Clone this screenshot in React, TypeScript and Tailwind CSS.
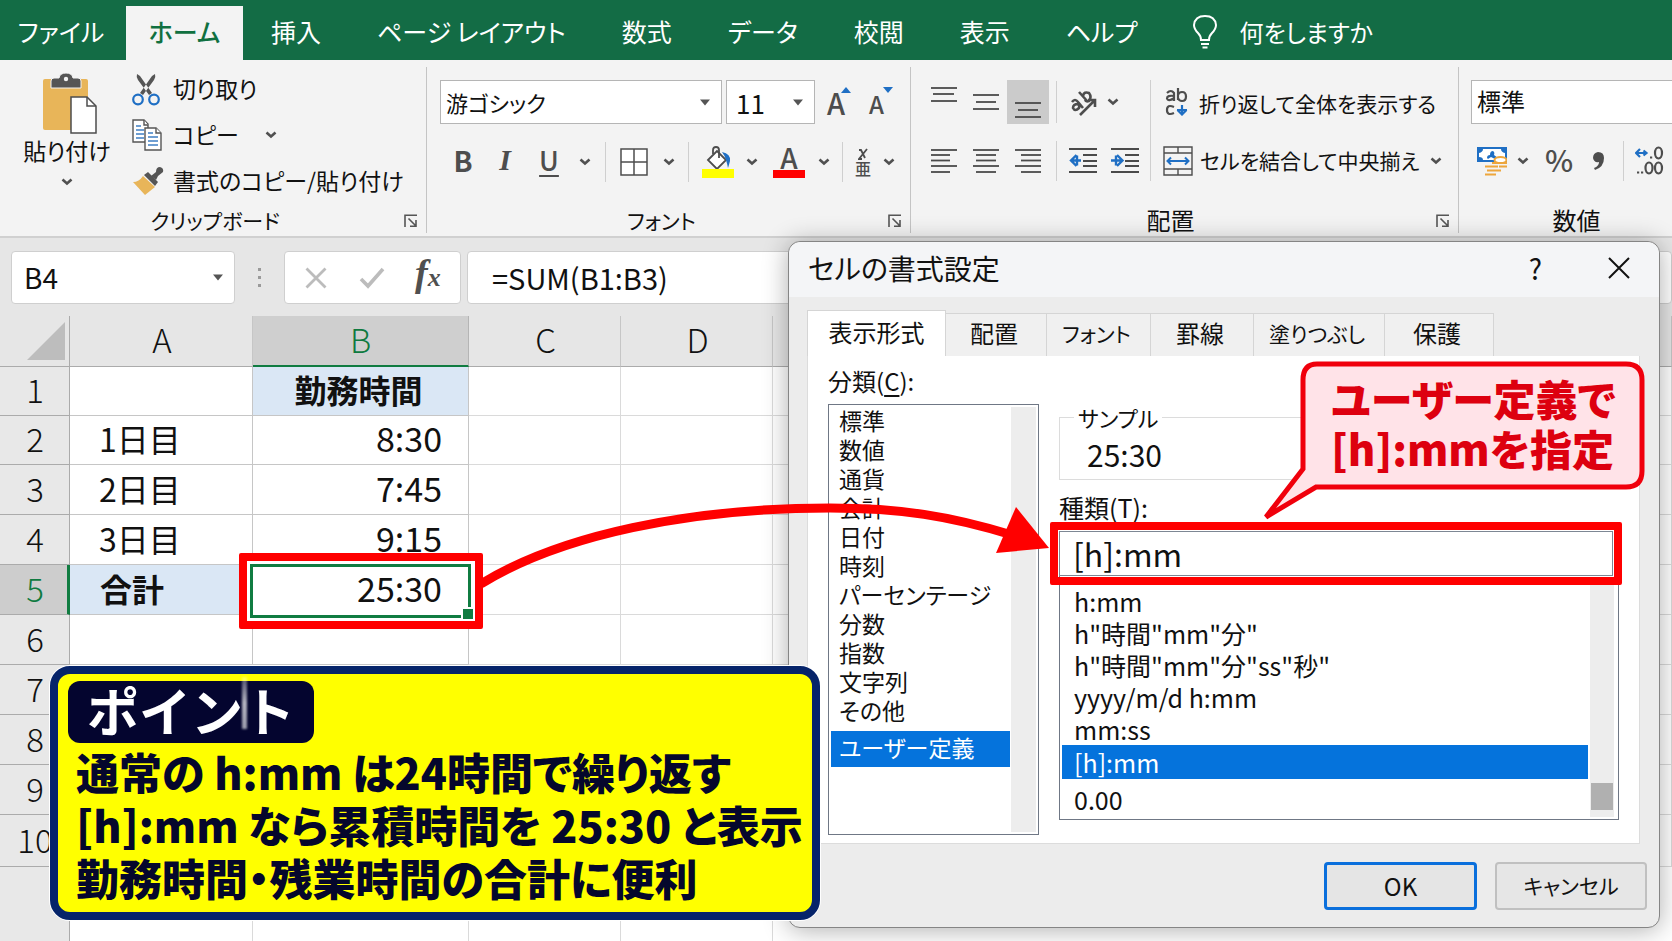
import type { ReactNode } from "react";

const ribbonTabs = ["挿入", "ページ レイアウト", "数式", "データ", "校閲", "表示", "ヘルプ"];
const columns = ["A", "B", "C", "D", "E"];
const rows = [
  { n: 1, a: "", b: "勤務時間", h: "h-[49px]" },
  { n: 2, a: "1日目", b: "8:30", h: "h-[49px]" },
  { n: 3, a: "2日目", b: "7:45", h: "h-[50px]" },
  { n: 4, a: "3日目", b: "9:15", h: "h-[50px]" },
  { n: 5, a: "合計", b: "25:30", h: "h-[50px]" },
  { n: 6, a: "", b: "", h: "h-[50px]" },
  { n: 7, a: "", b: "", h: "h-[50px]" },
  { n: 8, a: "", b: "", h: "h-[50px]" },
  { n: 9, a: "", b: "", h: "h-[50px]" },
  { n: 10, a: "", b: "", h: "h-[52px]" },
];
const categories = ["標準", "数値", "通貨", "会計", "日付", "時刻", "パーセンテージ", "分数", "指数", "文字列", "その他"];
const formats = ["h:mm", 'h"時間"mm"分"', 'h"時間"mm"分"ss"秒"', "yyyy/m/d h:mm", "mm:ss"];

function Chevron() {
  return (
    <svg width="12" height="8" viewBox="0 0 12 8" fill="none" stroke="#505050" strokeWidth="2.6" aria-hidden="true">
      <path d="M1.5 1.5 6 5.5l4.5-4" />
    </svg>
  );
}

function Triangle() {
  return (
    <svg width="12" height="7" viewBox="0 0 12 7" className="pointer-events-none absolute right-[10px]" aria-hidden="true">
      <path d="M1 .5h10L6 6.5z" fill="#555" />
    </svg>
  );
}

function Divider({ className = "h-10" }: { className?: string }) {
  return <div className={`w-px shrink-0 bg-[#cfcfcf] ${className}`} />;
}

function Launcher() {
  return (
    <button type="button" aria-label="詳細設定" className="shrink-0">
      <svg width="14" height="14" viewBox="0 0 14 14" fill="none" stroke="#555" strokeWidth="1.6" aria-hidden="true">
        <path d="M1 13V1.200h12M4.500 4.500l7.500 7.500M12 6v6.200H6" />
      </svg>
    </button>
  );
}

function Group({ label, className, labelClass = "", launcher = true, children }: { label: string; className: string; labelClass?: string; launcher?: boolean; children: ReactNode }) {
  return (
    <section aria-label={label} className={`flex flex-col ${className}`}>
      <div className="h-[142px]">{children}</div>
      <div className="flex h-6 items-center pr-2">
        <span className={`flex-1 pb-[2px] text-center leading-6 ${labelClass}`}>{label}</span>
        {launcher && <Launcher />}
      </div>
    </section>
  );
}

function Lines({ rows: data }: { rows: number[][] }) {
  return (
    <svg width="28" height="28" viewBox="0 0 28 28" stroke="#4a4a4a" strokeWidth="1.8" aria-hidden="true">
      {data.map(([x1, x2, y]) => (
        <path key={y} d={`M${x1} ${y}H${x2}`} />
      ))}
    </svg>
  );
}

function IconButton({ label, className = "", children }: { label: string; className?: string; children: ReactNode }) {
  return (
    <button type="button" aria-label={label} className={`flex shrink-0 items-center justify-center ${className}`}>
      {children}
    </button>
  );
}

function PasteIcon() {
  return (
    <svg width="56" height="62" viewBox="0 0 56 62" aria-hidden="true">
      <rect x="1" y="6" width="45" height="51" rx="2" fill="#e8b559" />
      <path d="M9 15V8q0-3 3-3h5q1-5 7-5t7 5h5q3 0 3 3v7z" fill="#555" stroke="#f3f3f3" strokeWidth="1" />
      <circle cx="24" cy="6" r="2.200" fill="#f3f3f3" />
      <path d="M29 24h16l9 9v27H29z" fill="#fff" stroke="#4d4d4d" strokeWidth="1.500" />
      <path d="M45 24v9h9" fill="none" stroke="#4d4d4d" strokeWidth="1.500" />
    </svg>
  );
}

function CutIcon() {
  return (
    <svg width="28" height="32" viewBox="0 0 28 32" fill="none" aria-hidden="true">
      <path d="M5 0q-1 3 1 6l11 15 3-2L8 2zM23 0q1 3-1 6L11 21l-3-2L20 2z" fill="#555" />
      <circle cx="6" cy="25.500" r="4.800" stroke="#1f6fc4" strokeWidth="2.200" />
      <circle cx="22" cy="25.500" r="4.800" stroke="#1f6fc4" strokeWidth="2.200" />
    </svg>
  );
}

function CopyIcon() {
  return (
    <svg width="30" height="32" viewBox="0 0 30 32" fill="#fff" stroke="#555" strokeWidth="1.400" aria-hidden="true">
      <path d="M1 1h11l4 4v18H1z" />
      <path d="M12 1v5h4" />
      <path d="M4 7h5M4 11h8M4 15h8M4 19h8" stroke="#3f7fc4" />
      <path d="M13 9h11l5 5v17H13z" />
      <path d="M24 9v5h5" />
      <path d="M16 14h5M16 18h10M16 22h10M16 26h10" stroke="#3f7fc4" />
    </svg>
  );
}

function PainterIcon() {
  return (
    <svg width="32" height="28" viewBox="0 0 32 28" aria-hidden="true">
      <path d="M1 15q6 0 10-6l12 11-10 8z" fill="#e8b559" />
      <path d="M12 8l4-3 10 10-3 4z" fill="#555" />
      <path d="M19 9l5-4q0-5 4-5 4 1 3 5l-5 4-2 4z" fill="#555" />
    </svg>
  );
}

function BorderIcon() {
  return (
    <svg width="28" height="28" viewBox="0 0 28 28" fill="#fff" stroke="#4d4d4d" strokeWidth="1.500" aria-hidden="true">
      <path d="M1 1h26v26H1zM14 1v26M1 14h26" />
    </svg>
  );
}

function FillIcon() {
  return (
    <svg width="32" height="32" viewBox="0 0 32 32" fill="none" aria-hidden="true">
      <path d="M6 14 15 5l9 9-9 9z" fill="#fff" stroke="#4d4d4d" strokeWidth="1.800" />
      <path d="M11 8V4q0-3 3-3t3 3v8" stroke="#4d4d4d" strokeWidth="1.800" />
      <path d="M20 6q9 2 8 9-1 4-2 7-1-5-2-8-1-4-4-8z" fill="#1f6fc4" />
      <path d="M0 23h32v9H0z" fill="#ff0" />
    </svg>
  );
}

function OrientationIcon() {
  return (
    <svg width="30" height="30" viewBox="0 0 30 30" fill="none" stroke="#4d4d4d" strokeWidth="2.600" aria-hidden="true">
      <path d="M11 28 26 13M19 13h7v7" />
      <path d="M3 15q3-4 6 0l5 6M9 17q-5 0-5 4 2 4 6 0 1-2-1-4" />
      <path d="M10 5l9 10M14 9q1-5 6-3 3 4 0 8-3 1-4-1" />
    </svg>
  );
}

function WrapIcon() {
  return (
    <svg width="24" height="28" viewBox="0 0 24 28" fill="none" stroke="#4d4d4d" strokeWidth="2.200" aria-hidden="true">
      <path d="M2 5q4-4 7 0v8M9 8q-7-1-7 2.500Q3 14 9 10" />
      <path d="M13 0v12M13 7q1-3 4-3 4 0 4 4.500T17 13q-3 0-4-3" />
      <path d="M9 19q-7-3-7 3t7 3" />
      <path d="M17 17v9M12.500 22l4.500 4.500 4.500-4.500M12 22h10" stroke="#1f6fc4" />
    </svg>
  );
}

function MergeIcon() {
  return (
    <svg width="30" height="30" viewBox="0 0 30 30" fill="none" stroke="#4d4d4d" strokeWidth="1.400" aria-hidden="true">
      <path d="M1 1h28v28H1zM1 7h28M1 23h28M15 1v6M15 23v6" />
      <path d="M5 15h20M8 11.500 4.500 15 8 18.500M22 11.500l3.500 3.500-3.500 3.500" stroke="#1f6fc4" strokeWidth="2" />
    </svg>
  );
}

function IndentIcon({ out }: { out?: boolean }) {
  return (
    <svg width="28" height="28" viewBox="0 0 28 28" fill="none" stroke="#4a4a4a" strokeWidth="1.800" aria-hidden="true">
      <path d="M0 2h28M14 8h14M14 14h14M14 19h14M0 25h28" />
      {out ? (
        <path d="M12 13.500H2M7.500 8 2 13.500 7.500 19M8 8.500v10" stroke="#1f6fc4" strokeWidth="2.400" />
      ) : (
        <path d="M0 13.500h11M6 8l5.500 5.500L6 19M5 8.500v10" stroke="#1f6fc4" strokeWidth="2.400" />
      )}
    </svg>
  );
}

function CurrencyIcon() {
  return (
    <svg width="30" height="30" viewBox="0 0 30 30" fill="none" aria-hidden="true">
      <path d="M0 1h30v15H0z" fill="#1f6fc4" />
      <path d="M6 3h18q0 3 4 4v4q-4 0-4 3H6q0-3-4-3V7q4-1 4-4z" fill="#fff" />
      <path d="M10 12q0-3 3-3 0-4 3-4 2 1 1 4l4 3-3 1-4-2-3 2z" fill="#1f6fc4" />
      <ellipse cx="23.500" cy="14" rx="6" ry="3" fill="#fff" stroke="#eda63c" strokeWidth="2" />
      <path d="M15 17h15M8 20.500h13M22 20.500h8M10 24.500h14M8 28.500h11" stroke="#eda63c" strokeWidth="2" />
    </svg>
  );
}

function DecimalIcon() {
  return (
    <svg width="29" height="30" viewBox="0 0 29 30" fill="none" stroke="#4d4d4d" strokeWidth="2.200" aria-hidden="true">
      <path d="M1 7h10M5 3 1 7l4 4M8.500 4.500 11.500 7 8.500 9.500" stroke="#1f6fc4" />
      <ellipse cx="23.500" cy="7" rx="3.500" ry="5.500" />
      <ellipse cx="14" cy="22" rx="3.500" ry="5.500" />
      <ellipse cx="23.500" cy="22" rx="3.500" ry="5.500" />
      <path d="M15 11.500h2.200M2 26.500h2.200M6 26.500h2.200" />
    </svg>
  );
}

function Ribbon() {
  return (
    <div className="flex overflow-hidden border-b-2 border-[#d0d0d0] bg-[#f3f3f3] pt-[7px] pb-[3px]">
      <Group label="クリップボード" className="w-[427px] shrink-0 border-r border-[#c4c4c4]" labelClass="pl-[26px] text-[21px]">
        <div className="flex h-full">
          <button type="button" className="ml-5 flex w-[94px] flex-col items-center pt-[6px] text-[23px]">
            <span className="pl-[5px]"><PasteIcon /></span>
            <span className="-mt-[3px] leading-9 whitespace-nowrap">貼り付け</span>
            <span className="mt-[10px]"><Chevron /></span>
          </button>
          <div className="ml-[18px] flex flex-col text-[23px]">
            <button type="button" className="flex h-[45px] items-center">
              <span className="w-[41px]"><CutIcon /></span>
              <span className="pb-[2px]">切り取り</span>
            </button>
            <button type="button" className="flex h-[46px] items-center">
              <span className="w-[41px]"><CopyIcon /></span>
              <span className="w-[92px] pb-[2px] text-left">コピー</span>
              <Chevron />
            </button>
            <button type="button" className="flex h-[46px] items-center whitespace-nowrap">
              <span className="w-[41px]"><PainterIcon /></span>
              <span className="pb-[2px]">書式のコピー/貼り付け</span>
            </button>
          </div>
        </div>
      </Group>

      <Group label="フォント" className="w-[484px] shrink-0 border-r border-[#c4c4c4]" labelClass="pl-2 text-[21px]">
        <div className="flex items-center pt-[13px] pl-[13px]">
          <div className="relative flex h-11 w-[282px] items-center border border-[#b5b5b5] bg-white">
            <select aria-label="フォント名" className="h-full w-full appearance-none pl-[5px] text-[22px]">
              <option>游ゴシック</option>
            </select>
            <Triangle />
          </div>
          <div className="relative ml-1 flex h-11 w-[89px] items-center border border-[#b5b5b5] bg-white">
            <select aria-label="フォント サイズ" className="h-full w-full appearance-none pl-[9px] text-[26px]">
              <option>11</option>
            </select>
            <Triangle />
          </div>
          <IconButton label="フォント サイズの拡大" className="ml-3">
            <span className="text-[29px] leading-10 font-medium text-[#4d4d4d]">A</span>
            <svg width="10" height="6" viewBox="0 0 10 6" className="mb-6 -ml-1" aria-hidden="true"><path d="M0 6 5 0l5 6z" fill="#1f6fc4" /></svg>
          </IconButton>
          <IconButton label="フォント サイズの縮小" className="ml-[18px]">
            <span className="pt-1 text-2xl font-medium text-[#4d4d4d]">A</span>
            <svg width="10" height="6" viewBox="0 0 10 6" className="mb-6 -ml-px" aria-hidden="true"><path d="M0 0h10L5 6z" fill="#1f6fc4" /></svg>
          </IconButton>
        </div>
        <div className="mt-[18px] flex h-10 items-center pl-[26px] text-[#4d4d4d]">
          <IconButton label="太字" className="w-5 pb-1 text-[28px] leading-9 font-bold">B</IconButton>
          <IconButton label="斜体" className="ml-[22px] w-5 pb-1 font-['Liberation_Serif',serif] text-3xl leading-9 font-bold italic">I</IconButton>
          <IconButton label="下線" className="ml-6 w-5 pb-1 text-[27px] leading-9 font-medium underline underline-offset-4">U</IconButton>
          <IconButton label="下線の種類" className="ml-5"><Chevron /></IconButton>
          <Divider className="ml-[14px] h-10" />
          <IconButton label="罫線" className="ml-[14px]"><BorderIcon /></IconButton>
          <IconButton label="罫線の種類" className="ml-[15px]"><Chevron /></IconButton>
          <Divider className="ml-[13px] h-10" />
          <IconButton label="塗りつぶしの色" className="ml-[13px]"><FillIcon /></IconButton>
          <IconButton label="塗りつぶしの色を選択" className="ml-3"><Chevron /></IconButton>
          <IconButton label="フォントの色" className="ml-[15px] h-8 w-8 border-b-8 border-[#f00] pb-[2px] text-[28px] leading-6 font-medium">A</IconButton>
          <IconButton label="フォントの色を選択" className="ml-[13px]"><Chevron /></IconButton>
          <Divider className="ml-3 h-10" />
          <IconButton label="ふりがな" className="ml-3 w-4 flex-col text-base leading-4 font-medium">
            <svg width="10" height="12" viewBox="0 0 10 12" fill="none" stroke="#4d4d4d" strokeWidth="1.800" aria-hidden="true"><path d="M1 2h2l4 8M9 1 1 11h3" /></svg>
            <span>亜</span>
          </IconButton>
          <IconButton label="ふりがなの設定" className="ml-3"><Chevron /></IconButton>
        </div>
      </Group>

      <Group label="配置" className="w-[548px] shrink-0 border-r border-[#c4c4c4]" labelClass="-ml-1.5 text-2xl">
        <div className="flex h-full pt-[13px]">
          <div>
            <div className="flex h-11 items-center pl-[19px]">
              <IconButton label="上揃え" className="-mt-1.5"><Lines rows={[[1, 27, 3], [3, 24, 9], [1, 27, 16]]} /></IconButton>
              <IconButton label="上下中央揃え" className="ml-[14px]"><Lines rows={[[1, 27, 7], [4, 24, 14], [1, 27, 21]]} /></IconButton>
              <IconButton label="下揃え" className="ml-[7px] h-11 w-[42px] bg-[#cbcbcb] pt-1"><Lines rows={[[1, 27, 13], [4, 24, 20], [1, 27, 27]]} /></IconButton>
              <Divider className="ml-[7px] h-[42px]" />
              <IconButton label="方向" className="ml-3"><OrientationIcon /></IconButton>
              <IconButton label="方向の選択" className="ml-2"><Chevron /></IconButton>
            </div>
            <div className="mt-[17px] flex h-10 items-center pl-[19px]">
              <IconButton label="左揃え"><Lines rows={[[1, 27, 3], [1, 20, 8], [1, 20, 13.5], [1, 27, 19], [1, 20, 25]]} /></IconButton>
              <IconButton label="中央揃え" className="ml-[14px]"><Lines rows={[[1, 27, 3], [4, 24, 8], [4, 24, 13.5], [1, 27, 19], [4, 24, 25]]} /></IconButton>
              <IconButton label="右揃え" className="ml-[14px]"><Lines rows={[[1, 27, 3], [7, 27, 8], [7, 27, 13.5], [1, 27, 19], [7, 27, 25]]} /></IconButton>
              <Divider className="ml-[14px] h-10" />
              <IconButton label="インデントを減らす" className="ml-3"><IndentIcon out /></IconButton>
              <IconButton label="インデントを増やす" className="ml-[14px]"><IndentIcon /></IconButton>
            </div>
          </div>
          <Divider className="ml-[11px] h-[101px]" />
          <div className="ml-3 text-[21px] whitespace-nowrap">
            <button type="button" className="flex h-11 items-center">
              <span className="w-9 pl-[2px]"><WrapIcon /></span>
              <span className="pt-[3px]">折り返して全体を表示する</span>
            </button>
            <div className="mt-[17px] flex h-10 items-center">
              <button type="button" className="flex items-center">
                <span className="w-[37px]"><MergeIcon /></span>セルを結合して中央揃え
              </button>
              <IconButton label="結合の種類" className="ml-[11px]"><Chevron /></IconButton>
            </div>
          </div>
        </div>
      </Group>

      <Group label="数値" className="min-w-[213px] flex-1" launcher={false} labelClass="pl-[30px] text-2xl">
        <div className="flex pt-[13px] pl-3">
          <select aria-label="表示形式" className="h-11 w-full appearance-none border border-r-0 border-[#b5b5b5] bg-white pb-[2px] pl-[5px] text-2xl">
            <option>標準</option>
          </select>
        </div>
        <div className="mt-[17px] flex h-10 items-center pl-[18px] text-[#4d4d4d]">
          <IconButton label="通貨表示形式"><CurrencyIcon /></IconButton>
          <IconButton label="通貨の選択" className="ml-[10px]"><Chevron /></IconButton>
          <IconButton label="パーセント スタイル" className="ml-4 pb-1 text-[30px] font-medium">%</IconButton>
          <IconButton label="桁区切りスタイル" className="ml-5 w-3">
            <svg width="12" height="18" viewBox="0 0 12 18" aria-hidden="true"><path d="M5 0q6 0 6 6 0 9-9 12l-1-2q5-2 5-6-5 1-6-4 0-5 5-6z" fill="#4d4d4d" /></svg>
          </IconButton>
          <Divider className="ml-[18px] h-10" />
          <IconButton label="小数点以下の表示桁数を増やす" className="ml-[11px]"><DecimalIcon /></IconButton>
        </div>
      </Group>
    </div>
  );
}

function FormulaBar() {
  return (
    <div className="flex h-[78px] bg-[#e6e6e6] pt-[13px] pl-[11px]">
      <div className="relative flex h-[53px] w-[224px] items-center rounded border border-[#cfcfcf] bg-white">
        <select aria-label="名前ボックス" className="h-full w-full appearance-none pb-[2px] pl-3 text-[28px]">
          <option>B4</option>
        </select>
        <Triangle />
      </div>
      <svg width="4" height="20" viewBox="0 0 4 20" className="mt-[17px] ml-[23px]" fill="#9a9a9a" aria-hidden="true">
        <path d="M0 0h3v3H0zM0 8h3v3H0zM0 16h3v3H0z" />
      </svg>
      <div className="ml-[22px] flex h-[53px] w-[177px] items-center rounded border border-[#cfcfcf] bg-white">
        <IconButton label="キャンセル" className="ml-5">
          <svg width="22" height="22" viewBox="0 0 22 22" stroke="#bcbcbc" strokeWidth="2.800" aria-hidden="true"><path d="m1.500 1.500 19 19M20.500 1.500l-19 19" /></svg>
        </IconButton>
        <IconButton label="入力" className="ml-8">
          <svg width="26" height="22" viewBox="0 0 26 22" fill="none" stroke="#bcbcbc" strokeWidth="3.600" aria-hidden="true"><path d="m2 12 7 7L24 2" /></svg>
        </IconButton>
        <button type="button" aria-label="関数の挿入" className="ml-[30px] pb-1 font-['Liberation_Serif',serif] text-[38px] leading-10 font-bold text-[#505050] italic">
          f<span className="text-[26px]">x</span>
        </button>
      </div>
      <input aria-label="数式バー" defaultValue="=SUM(B1:B3)" className="ml-[6px] h-[53px] min-w-0 flex-1 rounded border border-[#cfcfcf] bg-white pb-[2px] pl-6 text-[29px]" />
    </div>
  );
}

function Sheet() {
  return (
    <table className="w-full flex-1 table-fixed border-separate border-spacing-0 bg-white">
      <colgroup>
        <col className="w-[70px]" />
        <col className="w-[183px]" />
        <col className="w-[216px]" />
        <col className="w-[152px]" />
        <col className="w-[152px]" />
        <col />
      </colgroup>
      <thead>
        <tr className="h-[51px] bg-[#e6e6e6] text-[33px] leading-10">
          <th className="border-r border-b border-[#ababab] p-0">
            <svg width="39" height="40" viewBox="0 0 39 40" className="ml-[27px]" aria-hidden="true"><path d="M38 1v38H0z" fill="#bdbdbd" /></svg>
          </th>
          {columns.map((c) => (
            <th key={c} scope="col" className={c === "B" ? "border-r border-b-2 border-r-[#b5b5b5] border-b-[#107c41] bg-[#cfcfcf] p-0 pb-1 font-light text-[#0f7a40]" : "border-r border-b border-r-[#c6c6c6] border-b-[#ababab] p-0 pb-1 pl-[2px] font-light"}>
              {c}
            </th>
          ))}
        </tr>
      </thead>
      <tbody>
        {rows.map((r) => (
          <tr key={r.n} className={r.h}>
            <th scope="row" className={r.n === 5 ? "border-r-3 border-b border-r-[#107c41] border-b-[#ababab] bg-[#cdcdcd] p-0 pb-1 pl-[3px] text-[33px] leading-10 font-light text-[#0f7a40]" : "border-r border-b border-[#ababab] bg-[#e8e8e8] p-0 pb-1 pl-px text-[33px] leading-10 font-light"}>
              {r.n}
            </th>
            <td className={r.n === 5 ? "border-r border-b border-[#c6c6c6] bg-[#dae7f5] p-0 pb-1 pl-[30px] text-[32px] leading-10 font-bold" : "border-r border-b border-[#c6c6c6] p-0 pb-1 pl-[29px] text-[32px] leading-10"}>{r.a}</td>
            {r.n === 1 ? (
              <td className="border-r border-b border-[#c6c6c6] bg-[#dae7f5] p-0 pr-1 pb-1 text-center text-[32px] leading-10 font-bold">{r.b}</td>
            ) : (
              <td className={r.n === 5 ? "relative z-10 border-r border-b border-[#c6c6c6] p-0 pr-[26px] pb-1 text-right text-[34px] leading-10" : "border-r border-b border-[#c6c6c6] p-0 pr-[26px] pb-1 text-right text-[34px] leading-10"}>
                {r.n === 5 && (
                  <>
                    <span className="absolute -top-3 -right-[15px] -bottom-[15px] -left-[14px] rounded-xs border-8 border-[#f00] bg-white" />
                    <span className="absolute -top-px -right-[3px] -bottom-1 -left-[3px] border-[3px] border-[#107c41]" />
                    <span className="absolute -right-[5px] -bottom-[5px] size-3 border-t-2 border-l-2 border-white bg-[#107c41]" />
                  </>
                )}
                <span className="relative">{r.b}</span>
              </td>
            )}
            <td className="border-r border-b border-[#dadada]" />
            <td className="border-r border-b border-[#dadada]" />
            <td className="border-r border-b border-[#dadada]" />
          </tr>
        ))}
        <tr className="h-[100px]">
          <th className="border-r border-[#ababab] bg-[#e8e8e8]" />
          <td className="border-r border-[#dadada]" />
          <td className="border-r border-[#dadada]" />
          <td className="border-r border-[#dadada]" />
          <td className="border-r border-[#dadada]" />
          <td />
        </tr>
      </tbody>
    </table>
  );
}

function Callout() {
  return (
    <div className="absolute top-[119px] right-[14px] z-20 h-[162px] w-[385px]">
      <svg width="385" height="162" viewBox="0 0 385 162" className="absolute inset-0" aria-hidden="true">
        <path d="M57 3H366q16 0 16 16v91q0 16-16 16H56L6 156 43 108V19q0-16 14-16z" fill="#ffe3e8" stroke="#f0000c" strokeWidth="5" strokeLinejoin="miter" />
      </svg>
      <p className="relative pt-3 pl-[71px] text-[42px] leading-[50px] font-black whitespace-nowrap text-[#dd000f]">
        ユーザー定義で
        <br />
        [h]:mmを指定
      </p>
    </div>
  );
}

function FormatDialog() {
  const tab = "h-[43px] border-t border-r border-[#d5d5d5] bg-[#f0f0f0] pr-1 pb-1 text-center leading-9";
  return (
    <div role="dialog" aria-label="セルの書式設定" className="absolute top-[241px] right-3 left-[788px] flex flex-col rounded-xl border border-[#858585] bg-[#ececec] shadow-[0_2px_26px_rgba(0,0,0,0.32)]">
      <div className="flex h-[55px] items-center rounded-t-xl bg-[#f4f5f7] pr-[29px] pb-[3px] pl-[19px]">
        <h2 className="flex-1 text-[28px] leading-10">セルの書式設定</h2>
        <button type="button" aria-label="ヘルプ" className="mr-[66px] text-[28px] leading-8">?</button>
        <IconButton label="閉じる">
          <svg width="22" height="22" viewBox="0 0 22 22" stroke="#111" strokeWidth="2" aria-hidden="true"><path d="m1 1 20 20M21 1 1 21" /></svg>
        </IconButton>
      </div>
      <div role="tablist" className="flex items-end px-[18px] pt-[13px] text-2xl whitespace-nowrap">
        <button type="button" role="tab" aria-selected="true" className="h-[46px] w-[139px] border-x border-t border-[#d5d5d5] bg-white pb-1 leading-9">表示形式</button>
        <button type="button" role="tab" className={`w-[101px] text-2xl ${tab}`}>配置</button>
        <button type="button" role="tab" className={`w-[104px] text-[21px] ${tab}`}>フォント</button>
        <button type="button" role="tab" className={`w-[103px] text-2xl ${tab}`}>罫線</button>
        <button type="button" role="tab" className={`w-[131px] text-[21px] ${tab}`}>塗りつぶし</button>
        <button type="button" role="tab" className={`w-[109px] text-2xl ${tab}`}>保護</button>
      </div>
      <div className="mr-[19px] ml-[18px] flex h-[488px] border border-t-0 border-[#dcdcdc] bg-white px-5 pt-3">
        <div className="w-[211px] shrink-0">
          <p id="category" className="text-2xl leading-[26px]">分類(<u className="underline-offset-4">C</u>):</p>
          <div className="mt-[10px] flex h-[431px] border border-[#6f7785] p-[2px]">
            <ul role="listbox" aria-labelledby="category" className="flex-1 text-[23px]">
              {categories.map((c) => (
                <li key={c} role="option" aria-selected="false" className="h-[29px] pl-2 leading-[26px] whitespace-nowrap">{c}</li>
              ))}
              <li role="option" aria-selected="true" className="mt-[5px] h-9 bg-[#0573dc] pl-2 leading-[33px] text-white">ユーザー定義</li>
            </ul>
            <div className="ml-px w-[25px] bg-[#ededed]" />
          </div>
        </div>
        <div className="ml-5 min-w-0 flex-1 pt-9">
          <fieldset className="h-[76px] border border-[#dcdcdc]">
            <legend className="ml-[14px] px-1 text-[22px] leading-[26px]">サンプル</legend>
            <p className="pl-[27px] text-[30px] leading-[48px]">25:30</p>
          </fieldset>
          <label htmlFor="format" className="mt-[14px] block text-[25px] leading-[26px]">種類(T):</label>
          <div className="relative z-10 mt-[11px] mr-[6px] h-[45px]">
            <input id="format" defaultValue="[h]:mm" className="h-full w-full border border-[#7d8794] bg-white pb-px pl-[13px] text-[32px]" />
            <span className="pointer-events-none absolute -inset-[9px] rounded-xs border-8 border-[#f00]" />
          </div>
          <div className="flex h-[244px] border border-t-0 border-[#6f7785] p-[2px]">
            <ul role="listbox" aria-label="表示形式" className="flex-1 pt-[7px] text-[25px]">
              {formats.map((f) => (
                <li key={f} role="option" aria-selected="false" className="h-8 pl-3 leading-8 whitespace-nowrap">{f}</li>
              ))}
              <li role="option" aria-selected="true" className="mb-1 h-[34px] bg-[#0573dc] pl-3 leading-[34px] text-white">[h]:mm</li>
              <li role="option" aria-selected="false" className="h-8 pl-3 leading-8">0.00</li>
            </ul>
            <div className="mr-[2px] ml-[2px] flex w-6 flex-col justify-end bg-[#ededed] px-px pb-[7px]">
              <div className="h-[27px] bg-[#b0b0b0]" />
            </div>
          </div>
        </div>
      </div>
      <div className="flex h-[83px] justify-end gap-[18px] pt-[18px] pr-3">
        <button type="button" className="h-12 w-[153px] rounded border-[3px] border-[#0a6fdc] bg-[#e5e5e5] text-2xl">OK</button>
        <button type="button" className="h-12 w-[152px] rounded border-2 border-[#c0c0c0] bg-[#e6e6e6] text-[21px]">キャンセル</button>
      </div>
      <Callout />
    </div>
  );
}

function PointNote() {
  return (
    <aside className="absolute top-[666px] left-[50px] h-[254px] w-[770px] rounded-[20px] border-8 border-[#06246a] bg-[#ff0] pt-[7px] pl-[10px] text-[#05072c] ring-1 ring-white">
      <h3 className="relative h-[62px] w-[246px] rounded-xl bg-[#04052f] text-center text-[52px] leading-[58px] font-bold text-white [font-feature-settings:normal]">
        ポイント
        <span className="absolute -top-1 left-[174px] h-[52px] w-[5px] bg-linear-to-b from-white/30 via-white/70 to-white/60 blur-[1px]" />
      </h3>
      <p className="mt-[2px] pl-2 text-[43px] leading-[53px] font-black whitespace-nowrap">
        通常の h:mm は24時間で繰り返す
        <br />
        [h]:mm なら累積時間を 25:30 と表示
        <br />
        勤務時間・残業時間の合計に便利
      </p>
    </aside>
  );
}

export default function App() {
  return (
    <div className="relative flex min-h-screen flex-col overflow-hidden bg-white font-['Noto_Sans_CJK_JP',sans-serif] text-[#111] [font-feature-settings:'palt']">
      <div className="h-[941px]">
        <nav className="flex h-[60px] items-end bg-[#136c45] text-[25px] whitespace-nowrap text-white">
          <button type="button" className="h-[54px] w-[126px] pr-1 pb-[2px]">ファイル</button>
          <button type="button" className="h-[54px] w-[117px] bg-[#f3f3f3] pb-[2px] font-medium text-[#107040]">ホーム</button>
          {ribbonTabs.map((t) => (
            <button key={t} type="button" className="h-[54px] px-7 pb-[2px]">{t}</button>
          ))}
          <button type="button" className="flex h-[54px] items-center gap-[22px] pl-7 pb-[2px] text-2xl">
            <svg width="24" height="34" viewBox="0 0 24 34" fill="none" stroke="#fff" strokeWidth="2" aria-hidden="true">
              <path d="M8 25q0-4-3-7-4-4-4-8Q2 1 12 1t11 9q0 4-4 8-3 3-3 7zM8 29h8M9.500 32.500h5" />
            </svg>
            何をしますか
          </button>
        </nav>
        <Ribbon />
        <FormulaBar />
        <Sheet />
      </div>
      <FormatDialog />
      <svg width="580" height="100" viewBox="0 0 580 100" className="pointer-events-none absolute top-[500px] left-[480px] z-10" fill="none" aria-hidden="true">
        <path d="M1 84C80 35 210 8 350 8 420 8 470 16 532 35" stroke="#f00" strokeWidth="9" />
        <path d="M536 7 569 48 516 53z" fill="#f00" />
      </svg>
      <PointNote />
    </div>
  );
}
